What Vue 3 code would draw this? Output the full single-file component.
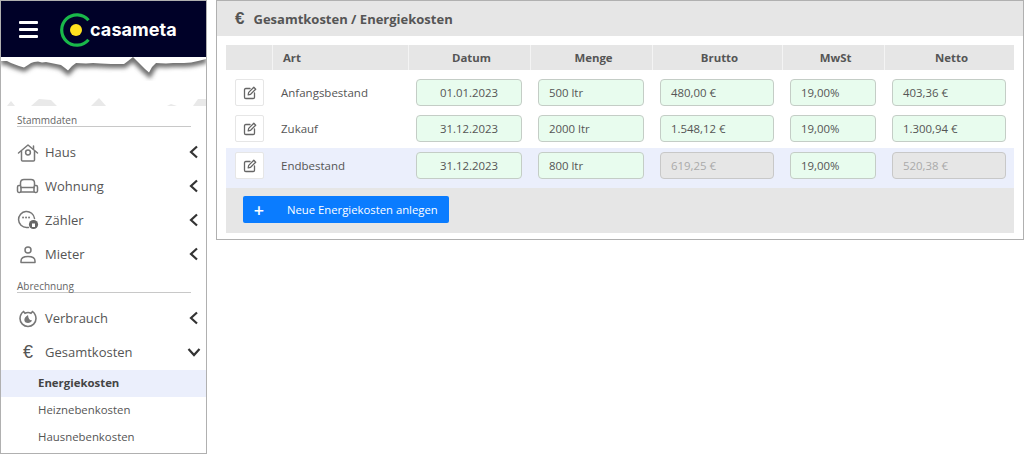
<script setup>
const stamm = [
  { label: 'Haus', icon: 'house' },
  { label: 'Wohnung', icon: 'sofa' },
  { label: 'Zähler', icon: 'meter' },
  { label: 'Mieter', icon: 'person' }
]
const columns = [
  { label: '', cls: '' },
  { label: 'Art', cls: 'left' },
  { label: 'Datum', cls: '' },
  { label: 'Menge', cls: '' },
  { label: 'Brutto', cls: '' },
  { label: 'MwSt', cls: '' },
  { label: 'Netto', cls: '' }
]
const rows = [
  { art: 'Anfangsbestand', datum: '01.01.2023', menge: '500 ltr', brutto: '480,00 €', mwst: '19,00%', netto: '403,36 €', off: false, hi: false },
  { art: 'Zukauf', datum: '31.12.2023', menge: '2000 ltr', brutto: '1.548,12 €', mwst: '19,00%', netto: '1.300,94 €', off: false, hi: false },
  { art: 'Endbestand', datum: '31.12.2023', menge: '800 ltr', brutto: '619,25 €', mwst: '19,00%', netto: '520,38 €', off: true, hi: true }
]
const tear = 'M0 4L6 4 10 6 14 7.5 18 9 23 10.5 27 8 30 6 33 5 37 4.5 41 5.5 45 5 50 6 55 7 60 8 64 11 67 13.5 71 9 75 6 85 6.5 92 6 100 6.5 110 7 123 7 127 4 132 0 136 4 140 8 144 12 148 15.5 151 10 155 6 165 6.5 172 6 183 6 190 5.5 197 4 205 2'
</script>

<template>
  <div class="page">
    <aside class="side">
      <div class="brand">
        <button class="burger" aria-label="Menü"><span></span><span></span><span></span></button>
        <svg class="logo" width="34" height="34" viewBox="0 0 34 34">
          <path d="M29.5 7.2A15.2 15.2 0 1 0 29.5 26.8" fill="none" stroke="#19b84a" stroke-width="3.2"/>
          <circle cx="17" cy="17" r="6" fill="#ffe11f"/>
        </svg>
        <span class="wordmark">casameta</span>
      </div>
      <svg class="torn" width="205" height="56" viewBox="0 0 205 56">
        <defs>
          <clipPath id="below-tear"><path :d="tear + 'V30H0Z'"/></clipPath>
          <filter id="soft" x="-5%" y="-50%" width="110%" height="200%"><feGaussianBlur stdDeviation="2"/></filter>
        </defs>
        <g clip-path="url(#below-tear)">
          <path :d="tear" fill="none" stroke="#707070" stroke-width="8" filter="url(#soft)"/>
        </g>
        <path d="M6 49L10 44 14 49ZM30 49L38 42 50 43 56 49ZM90 49L98 41 105 49ZM166 49L170 47 176 49ZM192 49L197 42H205V49Z" fill="#e9e9e9"/>
      </svg>
      <div class="group-title">Stammdaten</div>
      <nav>
        <a v-for="m in stamm" :key="m.label" class="item">
          <svg class="ico" width="26" height="26" viewBox="0 0 26 26" fill="none" stroke="#777" stroke-width="1.5" stroke-linejoin="round" stroke-linecap="round">
            <template v-if="m.icon === 'house'">
              <path d="M2.5 14L12 6 21.5 14"/><path d="M5.5 12.5V21C5.5 21.6 6 22 6.6 22H17.4C18 22 18.5 21.6 18.5 21V12.5"/><path d="M17.5 7V10"/>
              <circle cx="12" cy="13.5" r="2.4"/>
            </template>
            <template v-else-if="m.icon === 'sofa'">
              <path d="M4.5 12V10C4.5 7.5 6 6.5 8 6.5H15C17 6.5 18.5 7.5 18.5 10V12"/>
              <rect x="1.5" y="12.5" width="3.5" height="7" rx="1.4"/><rect x="18" y="12.5" width="3.5" height="7" rx="1.4"/>
              <path d="M5 14.5H18M5 19H18" stroke-width="1.7"/>
            </template>
            <template v-else-if="m.icon === 'meter'">
              <path d="M12.5 20.5H10.5A8 8 0 1 1 18.5 11.5"/>
              <path d="M7 10.5H7.1M10 10.5H10.1M13 10.5H13.1" stroke-width="1.8"/>
              <circle cx="17.5" cy="17.5" r="4.6" fill="#666" stroke="none"/><rect x="16" y="16.5" width="3" height="3.5" fill="#fff" stroke="none"/>
            </template>
            <template v-else>
              <circle cx="12" cy="9" r="3"/><path d="M5 21.6V20C5 16.5 8 15.5 12 15.5S19 16.5 19 20V21.6Z"/>
            </template>
          </svg>
          <span class="label">{{ m.label }}</span>
          <svg class="chev" width="10" height="14" viewBox="0 0 10 14"><path d="M8 1.5L2 7 8 12.5" fill="none" stroke="#333" stroke-width="2.2"/></svg>
        </a>
      </nav>
      <div class="group-title second">Abrechnung</div>
      <nav>
        <a class="item">
          <svg class="ico" width="26" height="26" viewBox="0 0 26 26" fill="none" stroke="#777" stroke-width="1.6">
            <path d="M7.5 6.5L9 8.3C10.5 7.5 13.5 7.5 15 8.3L16.5 6.5C19 8.5 20 10.5 20 13.5A8 8 0 0 1 4 13.5C4 10.5 5 8.5 7.5 6.5Z"/>
            <path d="M12 10C9.5 11.5 8 13.5 8.4 15.5C8.8 17.3 10.3 18 12 18S15.5 17 16 15.2C14 15.6 12.2 14 12 10Z" fill="#777" stroke="none"/>
          </svg>
          <span class="label">Verbrauch</span>
          <svg class="chev" width="10" height="14" viewBox="0 0 10 14"><path d="M8 1.5L2 7 8 12.5" fill="none" stroke="#333" stroke-width="2.2"/></svg>
        </a>
        <a class="item">
          <span class="ico euro">€</span>
          <span class="label">Gesamtkosten</span>
          <svg class="chev down" width="14" height="10" viewBox="0 0 14 10"><path d="M1.5 2L7 8 12.5 2" fill="none" stroke="#333" stroke-width="2.2"/></svg>
        </a>
      </nav>
      <div class="subs">
        <a class="sub active">Energiekosten</a>
        <a class="sub">Heiznebenkosten</a>
        <a class="sub">Hausnebenkosten</a>
      </div>
    </aside>

    <main class="panel">
      <h1 class="title"><span class="title-euro">€</span>Gesamtkosten / Energiekosten</h1>
      <div class="body">
        <div class="grid head">
          <div v-for="(c, i) in columns" :key="i" class="th" :class="c.cls">{{ c.label }}</div>
        </div>
        <div class="rows">
          <div v-for="r in rows" :key="r.art" class="grid row" :class="{ hi: r.hi }">
            <div class="cell edit-cell">
              <button class="edit" aria-label="Bearbeiten">
                <svg width="14" height="14" viewBox="0 0 14 14" fill="none" stroke="#666" stroke-width="1.3" stroke-linejoin="round" stroke-linecap="round">
                  <path d="M7 2.5H2.8C2 2.5 1.5 3 1.5 3.8V11.2C1.5 12 2 12.5 2.8 12.5H10.2C11 12.5 11.5 12 11.5 11.2V7"/>
                  <path d="M5.2 8.8L5.7 6.4 10.8 1.3 12.7 3.2 7.6 8.3Z"/>
                </svg>
              </button>
            </div>
            <div class="cell art">{{ r.art }}</div>
            <div class="cell"><div class="field center">{{ r.datum }}</div></div>
            <div class="cell"><div class="field">{{ r.menge }}</div></div>
            <div class="cell"><div class="field" :class="{ off: r.off }">{{ r.brutto }}</div></div>
            <div class="cell"><div class="field">{{ r.mwst }}</div></div>
            <div class="cell"><div class="field" :class="{ off: r.off }">{{ r.netto }}</div></div>
          </div>
        </div>
        <div class="foot">
          <button class="add"><span class="plus">+</span><span>Neue Energiekosten anlegen</span></button>
        </div>
      </div>
    </main>
  </div>
</template>

<style>
html, body { margin: 0; background: #fff; overflow: hidden; }
</style>

<style scoped>
.page {
  display: flex;
  align-items: flex-start;
  width: 1024px;
  height: 454px;
  overflow: hidden;
  font-family: "Open Sans", "Noto Sans", sans-serif;
  color: #555;
}
.side {
  box-sizing: border-box;
  width: 207px;
  height: 454px;
  flex: none;
  border: 1px solid #b0b0b0;
  overflow: hidden;
}
.brand {
  height: 56px;
  background: #000128;
  display: flex;
  align-items: center;
  padding-left: 18px;
}
.burger {
  width: 19px;
  height: 17px;
  padding: 0;
  border: 0;
  background: none;
  display: flex;
  flex-direction: column;
  justify-content: space-between;
}
.burger span { display: block; height: 3px; border-radius: 1px; background: #fff; }
.logo { margin: 2px 0 0 21px; }
.wordmark {
  margin-left: -3px;
  margin-top: 1px;
  color: #fff;
  font: 700 18px/1 Inter, "Open Sans", sans-serif;
  letter-spacing: 0.1px;
}
.torn { display: block; }
.group-title {
  margin: 0 15px 0 16px;
  height: 13px;
  font-size: 10px;
  line-height: 14px;
  color: #666;
  border-bottom: 1px solid #c8c8c8;
}
.group-title.second { margin-top: 8px; }
nav { display: flex; flex-direction: column; padding-top: 8px; }
.item { display: flex; align-items: center; height: 34px; padding-left: 15px; }
.ico { width: 26px; flex: none; margin-right: 3px; }
.euro { font-size: 18px; line-height: 26px; text-align: left; padding-left: 7px; box-sizing: border-box; color: #555; font-family: "Liberation Sans", sans-serif; }
.label { flex: 1; font-size: 13px; color: #555; }
.chev { margin-right: 7px; }
.chev.down { margin-right: 5px; }
.subs { margin-top: 1px; }
.sub { display: block; height: 27px; padding-left: 37px; font-size: 11.4px; line-height: 26px; color: #555; }
.sub.active { background: #ebeffc; font-weight: 700; color: #444; }
.panel {
  box-sizing: border-box;
  margin-left: 9px;
  width: 808px;
  height: 240px;
  border: 1px solid #b0b0b0;
  flex: none;
}
.title {
  margin: 0;
  height: 35px;
  background: #e6e6e6;
  display: flex;
  align-items: center;
  padding-left: 18px;
  font-size: 13px;
  font-weight: 700;
  color: #555;
}
.title-euro { font: 700 17px/1 "Liberation Sans", sans-serif; margin-right: 9px; }
.body { margin: 9px 9px 0; }
.grid { display: grid; grid-template-columns: 46px 136px 122px 122px 130px 102px 130px; }
.head { height: 24px; }
.th {
  background: #e6e6e6;
  border-left: 1px solid #f4f4f4;
  font-size: 11.4px;
  font-weight: 700;
  line-height: 25px;
  text-align: center;
  padding-left: 4px;
  color: #555;
}
.th:first-child { border-left: 0; }
.th.left { text-align: left; padding-left: 10px; }
.rows { padding-top: 5px; }
.row { box-sizing: border-box; height: 37px; align-items: center; }
.row:nth-child(2) { padding-bottom: 2px; }
.row.hi { height: 40px; padding-bottom: 5px; background: #ebeffc; }
.cell { padding: 0 8px; min-width: 0; }
.edit-cell { padding: 0 0 0 9px; }
.edit {
  box-sizing: border-box;
  width: 29px;
  height: 27px;
  padding: 0;
  border: 1px solid #e6e6e6;
  border-radius: 2px;
  background: #fff;
  display: flex;
  align-items: center;
  justify-content: center;
}
.art { padding: 0 0 0 9px; font-size: 11.5px; color: #555; }
.field {
  box-sizing: border-box;
  height: 27px;
  border: 1px solid #c4cdc6;
  border-radius: 4px;
  background: #e8fcee;
  padding: 0 10px;
  font-size: 11.4px;
  line-height: 25px;
  color: #555;
}
.field.center { text-align: center; }
.field.off { background: #e6e6e6; border-color: #c8c8c8; color: #aaa; }
.foot { background: #e6e6e6; height: 45px; padding: 8px 0 0 17px; box-sizing: border-box; }
.add {
  box-sizing: border-box;
  width: 206px;
  height: 27px;
  border: 0;
  border-radius: 2px;
  padding: 0;
  background: #0a7cff;
  color: #fff;
  font-family: inherit;
  font-size: 11.3px;
  display: flex;
  align-items: center;
}
.plus { width: 32px; text-align: center; font-size: 18px; font-weight: 600; line-height: 1; margin-right: 12px; }
</style>
